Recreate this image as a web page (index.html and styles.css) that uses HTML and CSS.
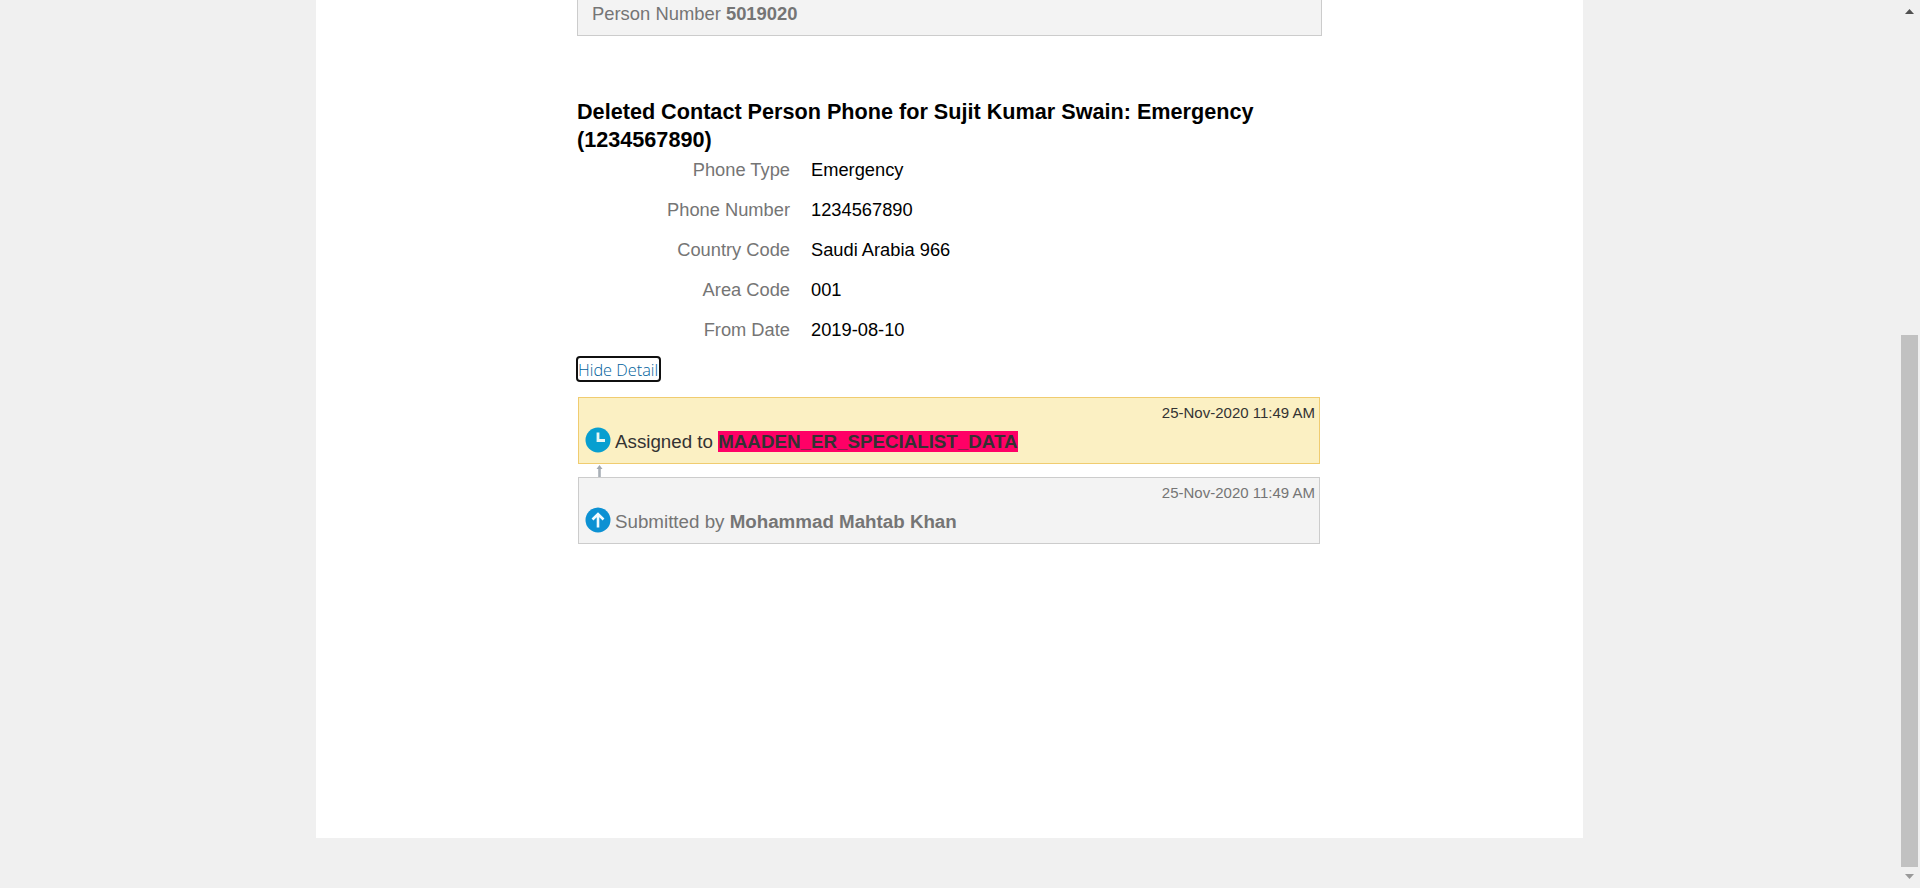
FILE: index.html
```html
<!DOCTYPE html>
<html lang="en">
<head>
<meta charset="utf-8">
<title>Transaction Approval</title>
<link rel="stylesheet" href="styles.css">
</head>
<body>
<main class="sheet">
  <section class="summary">Person Number <b>5019020</b></section>
  <h2 class="title">Deleted Contact Person Phone for Sujit Kumar Swain: Emergency (1234567890)</h2>
  <dl class="fields">
    <dt>Phone Type</dt><dd>Emergency</dd>
    <dt>Phone Number</dt><dd>1234567890</dd>
    <dt>Country Code</dt><dd>Saudi Arabia 966</dd>
    <dt>Area Code</dt><dd>001</dd>
    <dt>From Date</dt><dd>2019-08-10</dd>
  </dl>
  <a class="toggle">Hide Detail</a>
  <section class="history">
    <article class="entry entry-current">
      <time class="stamp">25-Nov-2020 11:49 AM</time>
      <div class="line">
        <svg class="icon" viewBox="0 0 26 26"><circle cx="13" cy="13" r="12.5" fill="#079fd0"/><path d="M13 5.5V13.5H20" fill="none" stroke="#e9f8f4" stroke-width="2.8"/></svg>
        <span>Assigned to <b class="mark">MAADEN_ER_SPECIALIST_DATA</b></span>
      </div>
    </article>
    <svg class="link" viewBox="0 0 8 13"><path d="M4.5 13V3" stroke="#a9b0b7" stroke-width="2.6"/><path d="M1.5 5L4.5 1L7.5 5Z" fill="#a1a8b0"/></svg>
    <article class="entry">
      <time class="stamp">25-Nov-2020 11:49 AM</time>
      <div class="line">
        <svg class="icon" viewBox="0 0 26 26"><circle cx="13" cy="13" r="12.5" fill="#0c91d3"/><path d="M13 20.5V7.5M7.5 12.5L13 7L18.5 12.5" fill="none" stroke="#f0fbff" stroke-width="2.6"/></svg>
        <span>Submitted by <b>Mohammad Mahtab Khan</b></span>
      </div>
    </article>
  </section>
</main>
<aside class="scrollbar">
  <svg class="arrow" viewBox="0 0 9 5"><path d="M4.5 0L9 5H0Z" fill="#505050"/></svg>
  <div class="thumb"></div>
  <svg class="arrow" viewBox="0 0 9 5"><path d="M0 0H9L4.5 5Z" fill="#999"/></svg>
</aside>
</body>
</html>
```
FILE: styles.css
```css
* { box-sizing: border-box; }
body {
  margin: 0;
  height: 888px;
  overflow: hidden;
  display: flex;
  justify-content: space-between;
  background: #f0f0f0;
  font-family: "Liberation Sans", Arial, sans-serif;
  font-size: 18.3px;
  color: #000;
}
.sheet {
  width: 1267px;
  height: 838px;
  margin-left: 316px;
  padding-left: 261px;
  background: #fff;
}
.summary {
  width: 745px;
  height: 36px;
  padding: 3px 0 0 14px;
  border: 1px solid #ccc;
  border-top: 0;
  background: #f3f3f3;
  color: #757575;
  font-size: 18.4px;
  line-height: 22px;
}
.title {
  width: 745px;
  margin: 62px 0 0;
  font-size: 21.64px;
  line-height: 28px;
}
.fields {
  display: grid;
  grid-template-columns: 213px 1fr;
  grid-auto-rows: 40px;
  column-gap: 21px;
  margin: -1px 0 0;
  line-height: 34px;
}
.fields dt { color: #757575; text-align: right; }
.fields dd { margin: 0; }
.toggle {
  display: block;
  width: 85px;
  height: 26px;
  margin: 3px 0 0 -1px;
  border: 2px solid #101010;
  border-radius: 4px;
  font-family: "Open Sans", "Noto Sans", sans-serif;
  font-weight: 300;
  font-size: 16.3px;
  line-height: 24px;
  color: #005f9c;
  white-space: nowrap;
}
.history {
  width: 742px;
  margin: 15px 0 0 1px;
}
.entry {
  height: 67px;
  padding: 6px 4px 0 6px;
  border: 1px solid #ccc;
  background: #f3f3f3;
  color: #757575;
}
.entry-current {
  border-color: #f0cc70;
  background: #fbf0c3;
  color: #333;
}
.stamp {
  display: block;
  text-align: right;
  font-size: 15px;
  line-height: 18px;
}
.line {
  display: flex;
  gap: 4px;
  height: 28px;
  margin-top: 5px;
  font-size: 18.75px;
  line-height: 29px;
}
.icon { width: 26px; height: 26px; flex: none; }
.mark { background: #ff0066; }
.link { display: block; width: 8px; height: 13px; margin-left: 17px; }
.scrollbar {
  width: 19px;
  padding: 9px 0;
  display: flex;
  flex-direction: column;
}
.arrow { width: 9px; height: 5px; margin-left: 4px; }
.thumb {
  width: 17px;
  height: 532px;
  margin: 321px 0 7px;
  background: #c1c1c1;
}
```
